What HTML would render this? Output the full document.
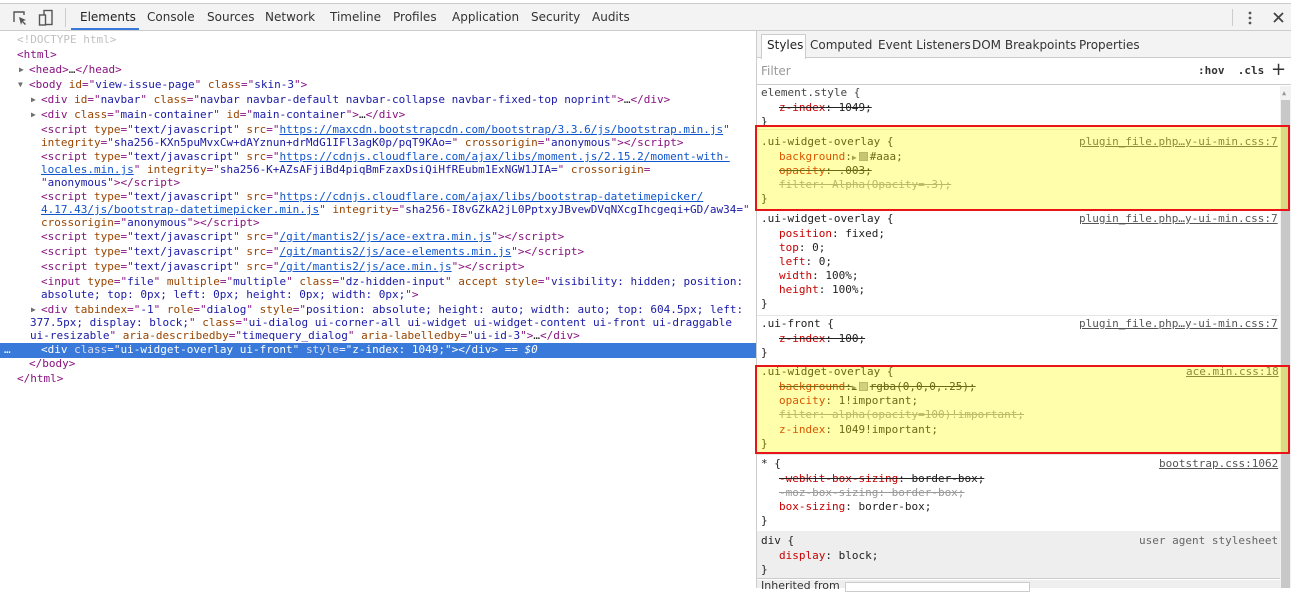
<!DOCTYPE html>
<html><head><style>
*{margin:0;padding:0;box-sizing:border-box}
body{width:1291px;height:588px;overflow:hidden;background:#fff;position:relative;font-family:"DejaVu Sans Mono",monospace;font-size:11px;color:#222}
.l{position:absolute;white-space:pre;line-height:14px;height:14px}
.t{color:#881280}.a{color:#994500}.v{color:#1a1aa6}.u{color:#1155cc;text-decoration:underline}.g{color:#c0c0c0}
.ar{position:absolute;font-size:8px;color:#6e6e6e;line-height:14px}
#top{position:absolute;left:0;top:3px;width:1291px;height:28px;background:#f3f3f3;border-top:1px solid #ccc;border-bottom:1px solid #ccc;font-family:"DejaVu Sans","Liberation Sans",sans-serif;font-size:12px;color:#333}
#top span{position:absolute;top:6px}
#split{position:absolute;left:756px;top:31px;width:1px;height:557px;background:#ccc}
#rt{position:absolute;left:757px;top:31px;width:534px;height:27px;background:#f3f3f3;border-bottom:1px solid #ccc;font-family:"DejaVu Sans","Liberation Sans",sans-serif;font-size:12px;color:#333}
#rt span{position:absolute;top:7px}
.sec{position:absolute;left:757px;width:522px;border-bottom:1px solid #e6e6e6}
.p{color:#c80000}.s{text-decoration:line-through}.src{color:#555;text-decoration:underline}
.hl{position:absolute;left:755px;width:535px;border:2px solid #e8141a;background:rgba(255,255,0,.33)}
</style></head><body>
<div id="top">
<svg style="position:absolute;left:12px;top:6px" width="16" height="16"><path d="M2 12V2h10v3" fill="none" stroke="#555" stroke-width="1.4"/><path d="M7 7l7 3-3 1 3 3-1 1-3-3-1 3z" fill="#555"/></svg>
<svg style="position:absolute;left:38px;top:5px" width="16" height="18"><rect x="6" y="1.5" width="8" height="14" fill="none" stroke="#555" stroke-width="1.4"/><rect x="1.5" y="6" width="6" height="10" fill="#f3f3f3" stroke="#555" stroke-width="1.4"/></svg>
<div style="position:absolute;left:65px;top:4px;width:1px;height:19px;background:#ccc"></div>
<span style="left:80px;color:#222">Elements</span>
<div style="position:absolute;left:71px;top:24px;width:68px;height:2px;background:#3879d9"></div>
<span style="left:147px">Console</span><span style="left:207px">Sources</span><span style="left:265px">Network</span><span style="left:330px">Timeline</span><span style="left:393px">Profiles</span><span style="left:452px">Application</span><span style="left:531px">Security</span><span style="left:592px">Audits</span>
<div style="position:absolute;left:1232px;top:5px;width:1px;height:17px;background:#ccc"></div>
<svg style="position:absolute;left:1247px;top:6px" width="6" height="16"><circle cx="3" cy="3" r="1.4" fill="#555"/><circle cx="3" cy="8" r="1.4" fill="#555"/><circle cx="3" cy="13" r="1.4" fill="#555"/></svg>
<svg style="position:absolute;left:1273px;top:8px" width="11" height="11"><path d="M1 1l9 9M10 1l-9 9" stroke="#444" stroke-width="1.8"/></svg>
</div>

<div style="position:absolute;left:0;top:343px;width:756px;height:15px;background:#3879d9"></div>
<div class="l g" style="left:17px;top:33px">&lt;!DOCTYPE html&gt;</div>
<div class="l t" style="left:17px;top:48px">&lt;html&gt;</div>
<div class="ar" style="left:19px;top:63px">▶</div><div class="l" style="left:29px;top:63px"><span class="t">&lt;head&gt;</span>…<span class="t">&lt;/head&gt;</span></div>
<div class="ar" style="left:18px;top:78px">▼</div><div class="l" style="left:29px;top:78px"><span class="t">&lt;body </span><span class="a">id</span><span class="t">="</span><span class="v">view-issue-page</span><span class="t">" </span><span class="a">class</span><span class="t">="</span><span class="v">skin-3</span><span class="t">"&gt;</span></div>
<div class="ar" style="left:31px;top:93px">▶</div><div class="l" style="left:41px;top:93px"><span class="t">&lt;div </span><span class="a">id</span><span class="t">="</span><span class="v">navbar</span><span class="t">" </span><span class="a">class</span><span class="t">="</span><span class="v">navbar navbar-default navbar-collapse navbar-fixed-top noprint</span><span class="t">"&gt;</span>…<span class="t">&lt;/div&gt;</span></div>
<div class="ar" style="left:31px;top:108px">▶</div><div class="l" style="left:41px;top:108px"><span class="t">&lt;div </span><span class="a">class</span><span class="t">="</span><span class="v">main-container</span><span class="t">" </span><span class="a">id</span><span class="t">="</span><span class="v">main-container</span><span class="t">"&gt;</span>…<span class="t">&lt;/div&gt;</span></div>
<div class="l" style="left:41px;top:123px"><span class="t">&lt;script </span><span class="a">type</span><span class="t">="</span><span class="v">text/javascript</span><span class="t">" </span><span class="a">src</span><span class="t">="</span><span class="u">https://maxcdn.bootstrapcdn.com/bootstrap/3.3.6/js/bootstrap.min.js</span><span class="t">"</span></div>
<div class="l" style="left:41px;top:136px"><span class="a">integrity</span><span class="t">="</span><span class="v">sha256-KXn5puMvxCw+dAYznun+drMdG1IFl3agK0p/pqT9KAo=</span><span class="t">" </span><span class="a">crossorigin</span><span class="t">="</span><span class="v">anonymous</span><span class="t">"&gt;&lt;/script&gt;</span></div>
<div class="l" style="left:41px;top:150px"><span class="t">&lt;script </span><span class="a">type</span><span class="t">="</span><span class="v">text/javascript</span><span class="t">" </span><span class="a">src</span><span class="t">="</span><span class="u">https://cdnjs.cloudflare.com/ajax/libs/moment.js/2.15.2/moment-with-</span></div>
<div class="l" style="left:41px;top:163px"><span class="u">locales.min.js</span><span class="t">" </span><span class="a">integrity</span><span class="t">="</span><span class="v">sha256-K+AZsAFjiBd4piqBmFzaxDsiQiHfREubm1ExNGW1JIA=</span><span class="t">" </span><span class="a">crossorigin</span><span class="t">=</span></div>
<div class="l" style="left:41px;top:176px"><span class="t">"</span><span class="v">anonymous</span><span class="t">"&gt;&lt;/script&gt;</span></div>
<div class="l" style="left:41px;top:190px"><span class="t">&lt;script </span><span class="a">type</span><span class="t">="</span><span class="v">text/javascript</span><span class="t">" </span><span class="a">src</span><span class="t">="</span><span class="u">https://cdnjs.cloudflare.com/ajax/libs/bootstrap-datetimepicker/</span></div>
<div class="l" style="left:41px;top:203px"><span class="u">4.17.43/js/bootstrap-datetimepicker.min.js</span><span class="t">" </span><span class="a">integrity</span><span class="t">="</span><span class="v">sha256-I8vGZkA2jL0PptxyJBvewDVqNXcgIhcgeqi+GD/aw34=</span><span class="t">"</span></div>
<div class="l" style="left:41px;top:216px"><span class="a">crossorigin</span><span class="t">="</span><span class="v">anonymous</span><span class="t">"&gt;&lt;/script&gt;</span></div>
<div class="l" style="left:41px;top:230px"><span class="t">&lt;script </span><span class="a">type</span><span class="t">="</span><span class="v">text/javascript</span><span class="t">" </span><span class="a">src</span><span class="t">="</span><span class="u">/git/mantis2/js/ace-extra.min.js</span><span class="t">"&gt;&lt;/script&gt;</span></div>
<div class="l" style="left:41px;top:245px"><span class="t">&lt;script </span><span class="a">type</span><span class="t">="</span><span class="v">text/javascript</span><span class="t">" </span><span class="a">src</span><span class="t">="</span><span class="u">/git/mantis2/js/ace-elements.min.js</span><span class="t">"&gt;&lt;/script&gt;</span></div>
<div class="l" style="left:41px;top:260px"><span class="t">&lt;script </span><span class="a">type</span><span class="t">="</span><span class="v">text/javascript</span><span class="t">" </span><span class="a">src</span><span class="t">="</span><span class="u">/git/mantis2/js/ace.min.js</span><span class="t">"&gt;&lt;/script&gt;</span></div>
<div class="l" style="left:41px;top:275px"><span class="t">&lt;input </span><span class="a">type</span><span class="t">="</span><span class="v">file</span><span class="t">" </span><span class="a">multiple</span><span class="t">="</span><span class="v">multiple</span><span class="t">" </span><span class="a">class</span><span class="t">="</span><span class="v">dz-hidden-input</span><span class="t">" </span><span class="a">accept style</span><span class="t">="</span><span class="v">visibility: hidden; position:</span></div>
<div class="l" style="left:41px;top:288px"><span class="v">absolute; top: 0px; left: 0px; height: 0px; width: 0px;</span><span class="t">"&gt;</span></div>
<div class="ar" style="left:31px;top:303px">▶</div><div class="l" style="left:41px;top:303px"><span class="t">&lt;div </span><span class="a">tabindex</span><span class="t">="</span><span class="v">-1</span><span class="t">" </span><span class="a">role</span><span class="t">="</span><span class="v">dialog</span><span class="t">" </span><span class="a">style</span><span class="t">="</span><span class="v">position: absolute; height: auto; width: auto; top: 604.5px; left:</span></div>
<div class="l" style="left:30px;top:316px"><span class="v">377.5px; display: block;</span><span class="t">" </span><span class="a">class</span><span class="t">="</span><span class="v">ui-dialog ui-corner-all ui-widget ui-widget-content ui-front ui-draggable</span></div>
<div class="l" style="left:30px;top:329px"><span class="v">ui-resizable</span><span class="t">" </span><span class="a">aria-describedby</span><span class="t">="</span><span class="v">timequery_dialog</span><span class="t">" </span><span class="a">aria-labelledby</span><span class="t">="</span><span class="v">ui-id-3</span><span class="t">"&gt;</span>…<span class="t">&lt;/div&gt;</span></div>
<div class="l" style="left:4px;top:343px;color:#fff">…</div>
<div class="l" style="left:41px;top:343px;color:#fff">&lt;div <span style="color:#dde">class</span>="ui-widget-overlay ui-front" <span style="color:#dde">style</span>="z-index: 1049;"&gt;&lt;/div&gt; == <i>$0</i></div>
<div class="l t" style="left:29px;top:357px">&lt;/body&gt;</div>
<div class="l t" style="left:17px;top:372px">&lt;/html&gt;</div>

<div id="split"></div>
<div id="rt">
<div style="position:absolute;left:4px;top:3px;width:45px;height:25px;background:#fff;border:1px solid #ccc;border-bottom:none"></div>
<span style="left:10px;color:#222">Styles</span><span style="left:53px">Computed</span><span style="left:121px">Event Listeners</span><span style="left:215px">DOM Breakpoints</span><span style="left:322px">Properties</span>
</div>
<div style="position:absolute;left:757px;top:59px;width:534px;height:26px;border-bottom:1px solid #ccc;font-family:'DejaVu Sans',sans-serif;font-size:12px;color:#999"><span style="position:absolute;left:4px;top:5px">Filter</span><span style="position:absolute;left:441px;top:5px;color:#333;font-family:'DejaVu Sans Mono',monospace;font-size:11px;font-weight:bold">:hov&nbsp; .cls</span><span style="position:absolute;left:514px;top:0px;color:#333;font-size:18px">+</span></div>
<div style="position:absolute;left:1280px;top:86px;width:11px;height:502px;background:#f2f2f2"></div>
<div style="position:absolute;left:1281px;top:100px;width:9px;height:488px;background:#c8c8c8"></div>
<div style="position:absolute;left:1282px;top:89px;font-size:7px;color:#999">▲</div>

<div class="sec" style="top:86px;height:44px"></div>
<div class="l" style="left:761px;top:86px;color:#444">element.style {</div>
<div class="l s" style="left:779px;top:101px"><span class="p">z-index</span>: 1049;</div>
<div class="l" style="left:761px;top:115px">}</div>

<div class="l" style="left:761px;top:135px">.ui-widget-overlay {</div><div class="l src" style="left:1079px;top:135px">plugin_file.php…y-ui-min.css:7</div>
<div class="l" style="left:779px;top:150px"><span class="p">background</span>:<span style="font-size:8px;color:#777">▶</span><span style="display:inline-block;width:9px;height:9px;background:#aaa;border:1px solid #999;vertical-align:-1px;margin:0 2px"></span>#aaa;</div>
<div class="l s" style="left:779px;top:164px"><span class="p">opacity</span>: .003;</div>
<div class="l s" style="left:779px;top:178px;color:#999">filter: Alpha(Opacity=.3);</div>
<div class="l" style="left:761px;top:192px">}</div>
<div class="sec" style="top:130px;height:81px"></div>

<div class="l" style="left:761px;top:212px">.ui-widget-overlay {</div><div class="l src" style="left:1079px;top:212px">plugin_file.php…y-ui-min.css:7</div>
<div class="l" style="left:779px;top:227px"><span class="p">position</span>: fixed;</div>
<div class="l" style="left:779px;top:241px"><span class="p">top</span>: 0;</div>
<div class="l" style="left:779px;top:255px"><span class="p">left</span>: 0;</div>
<div class="l" style="left:779px;top:269px"><span class="p">width</span>: 100%;</div>
<div class="l" style="left:779px;top:283px"><span class="p">height</span>: 100%;</div>
<div class="l" style="left:761px;top:297px">}</div>
<div class="sec" style="top:211px;height:105px"></div>

<div class="l" style="left:761px;top:317px">.ui-front {</div><div class="l src" style="left:1079px;top:317px">plugin_file.php…y-ui-min.css:7</div>
<div class="l s" style="left:779px;top:332px"><span class="p">z-index</span>: 100;</div>
<div class="l" style="left:761px;top:346px">}</div>

<div class="l" style="left:761px;top:365px">.ui-widget-overlay {</div><div class="l src" style="left:1186px;top:365px">ace.min.css:18</div>
<div class="l s" style="left:779px;top:380px"><span class="p">background</span>:<span style="font-size:8px;color:#777">▶</span><span style="display:inline-block;width:9px;height:9px;background:#bbb;border:1px solid #999;vertical-align:-1px;margin:0 2px"></span>rgba(0,0,0,.25);</div>
<div class="l" style="left:779px;top:394px"><span class="p">opacity</span>: 1!important;</div>
<div class="l s" style="left:779px;top:408px;color:#999">filter: alpha(opacity=100)!important;</div>
<div class="l" style="left:779px;top:423px"><span class="p">z-index</span>: 1049!important;</div>
<div class="l" style="left:761px;top:437px">}</div>
<div class="sec" style="top:360px;height:95px"></div>

<div class="l" style="left:761px;top:457px">* {</div><div class="l src" style="left:1159px;top:457px">bootstrap.css:1062</div>
<div class="l s" style="left:779px;top:472px"><span class="p">-webkit-box-sizing</span>: border-box;</div>
<div class="l s" style="left:779px;top:486px;color:#999">-moz-box-sizing: border-box;</div>
<div class="l" style="left:779px;top:500px"><span class="p">box-sizing</span>: border-box;</div>
<div class="l" style="left:761px;top:514px">}</div>

<div style="position:absolute;left:757px;top:531px;width:523px;height:48px;background:#eee;border-bottom:1px solid #ccc"></div>
<div class="l" style="left:761px;top:534px">div {</div><div class="l" style="left:1139px;top:534px;color:#666">user agent stylesheet</div>
<div class="l" style="left:779px;top:549px"><span class="p">display</span>: block;</div>
<div class="l" style="left:761px;top:563px">}</div>
<div style="position:absolute;left:757px;top:580px;width:523px;height:8px;background:#eee"></div>
<div class="l" style="left:761px;top:579px;font-family:'DejaVu Sans',sans-serif;color:#333">Inherited from</div>
<div style="position:absolute;left:845px;top:582px;width:185px;height:10px;background:#fff;border:1px solid #ccc"></div>

<div class="hl" style="top:125px;height:86px"></div>
<div class="hl" style="top:365px;height:89px"></div>
</body></html>
